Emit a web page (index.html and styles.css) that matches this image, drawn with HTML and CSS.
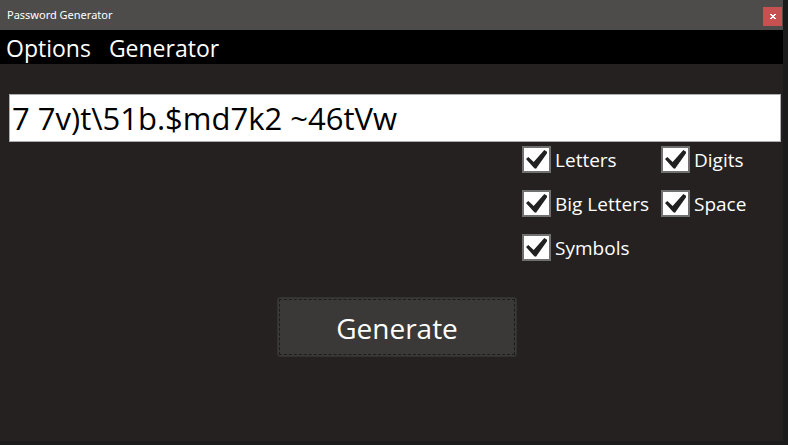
FILE: index.html
```html
<!DOCTYPE html>
<html lang="en">
<head>
<meta charset="utf-8">
<title>Password Generator</title>
<link rel="stylesheet" href="styles.css">
</head>
<body>
<svg class="sprite" aria-hidden="true">
  <symbol id="tick" viewBox="0 0 87 81"><path d="M12 39L19 33L35 48L67 12L75 17V22L42 68L37 67Z"/></symbol>
</svg>
<div class="window">
  <header class="titlebar">
    <h1 class="title">Password Generator</h1>
    <button class="close" type="button" aria-label="Close">
      <svg class="close-icon" viewBox="0 0 6 5" aria-hidden="true"><path d="M0 0H2V1H4V0H6V1H5V2H4V3H5V4H6V5H4V4H2V5H0V4H1V3H2V2H1V1H0Z"/></svg>
    </button>
  </header>
  <nav class="menubar">
    <button class="menu" type="button">Options</button>
    <button class="menu" type="button">Generator</button>
  </nav>
  <main class="content">
    <input class="password" type="text" aria-label="Password" value="7 7v)t\51b.$md7k2 ~46tVw">
    <div class="choices">
      <label class="choice"><span class="box"><input class="check" type="checkbox" checked><svg class="tick" aria-hidden="true"><use href="#tick"/></svg></span>Letters</label>
      <label class="choice"><span class="box"><input class="check" type="checkbox" checked><svg class="tick" aria-hidden="true"><use href="#tick"/></svg></span>Digits</label>
      <label class="choice"><span class="box"><input class="check" type="checkbox" checked><svg class="tick" aria-hidden="true"><use href="#tick"/></svg></span>Big Letters</label>
      <label class="choice"><span class="box"><input class="check" type="checkbox" checked><svg class="tick" aria-hidden="true"><use href="#tick"/></svg></span>Space</label>
      <label class="choice"><span class="box"><input class="check" type="checkbox" checked><svg class="tick" aria-hidden="true"><use href="#tick"/></svg></span>Symbols</label>
    </div>
    <button class="generate" type="button"><span class="focus">Generate</span></button>
  </main>
</div>
</body>
</html>
```
FILE: styles.css
```css
* { box-sizing: border-box; }

body {
  margin: 0;
  min-height: 100vh;
  display: flex;
  padding: 0 5px 4px 0;
  background: #1b1b1b;
  color: #fff;
  font-family: "Open Sans", "Noto Sans", sans-serif;
}

button, input { font-family: inherit; color: inherit; }

.sprite { position: absolute; width: 0; height: 0; }

.window {
  flex: 1;
  display: flex;
  flex-direction: column;
  background: #252120;
}

.titlebar {
  display: flex;
  justify-content: space-between;
  align-items: center;
  height: 30px;
  padding: 0 1px 0 7px;
  background: #4d4c4a;
}

.title {
  margin: 0;
  font-family: "Noto Sans", sans-serif;
  font-size: 11px;
  font-weight: 400;
  line-height: 30px;
}

.close {
  display: grid;
  place-items: center;
  align-self: flex-end;
  width: 19px;
  height: 19px;
  margin-bottom: 4px;
  padding: 0;
  border: 0;
  background: #c75050;
}

.close-icon { width: 6px; height: 5px; fill: #fff; }

.menubar {
  display: flex;
  gap: 18px;
  height: 34px;
  padding: 0 6px;
  background: #000;
}

.menu {
  padding: 2px 0 0;
  border: 0;
  background: none;
  font-size: 23px;
  line-height: 30px;
}

.content {
  flex: 1;
  display: flex;
  flex-direction: column;
  padding: 30px 2px 0 9px;
}

.password {
  width: 100%;
  height: 48px;
  padding: 0 2px;
  border: 1px solid #abadb3;
  border-radius: 0;
  background: #fff;
  color: #000;
  font-size: 31px;
  outline: 0;
}

.choices {
  display: grid;
  grid-template-columns: auto 120px;
  column-gap: 12px;
  row-gap: 16px;
  align-self: flex-end;
  padding-top: 4px;
}

.choice {
  display: flex;
  align-items: flex-start;
  gap: 4px;
  height: 28px;
  font-size: 19px;
  line-height: 28px;
  white-space: nowrap;
}

.box { display: grid; width: 29px; height: 27px; }

.check, .tick { grid-area: 1 / 1; width: 29px; height: 27px; margin: 0; }

.check {
  appearance: none;
  border: 2px solid #707070;
  background: #fff;
}

.tick { visibility: hidden; fill: #212121; pointer-events: none; }
.check:checked + .tick { visibility: visible; }

.generate {
  align-self: center;
  width: 240px;
  height: 60px;
  margin-top: 35px;
  margin-left: 4px;
  padding: 1px;
  border: 1px solid #333231;
  border-radius: 3px;
  background: #3a3937;
  font-size: 28px;
}

.focus {
  display: flex;
  align-items: center;
  justify-content: center;
  height: 100%;
  padding-top: 2px;
  border: 1px dashed #1c1c1b;
}
```
